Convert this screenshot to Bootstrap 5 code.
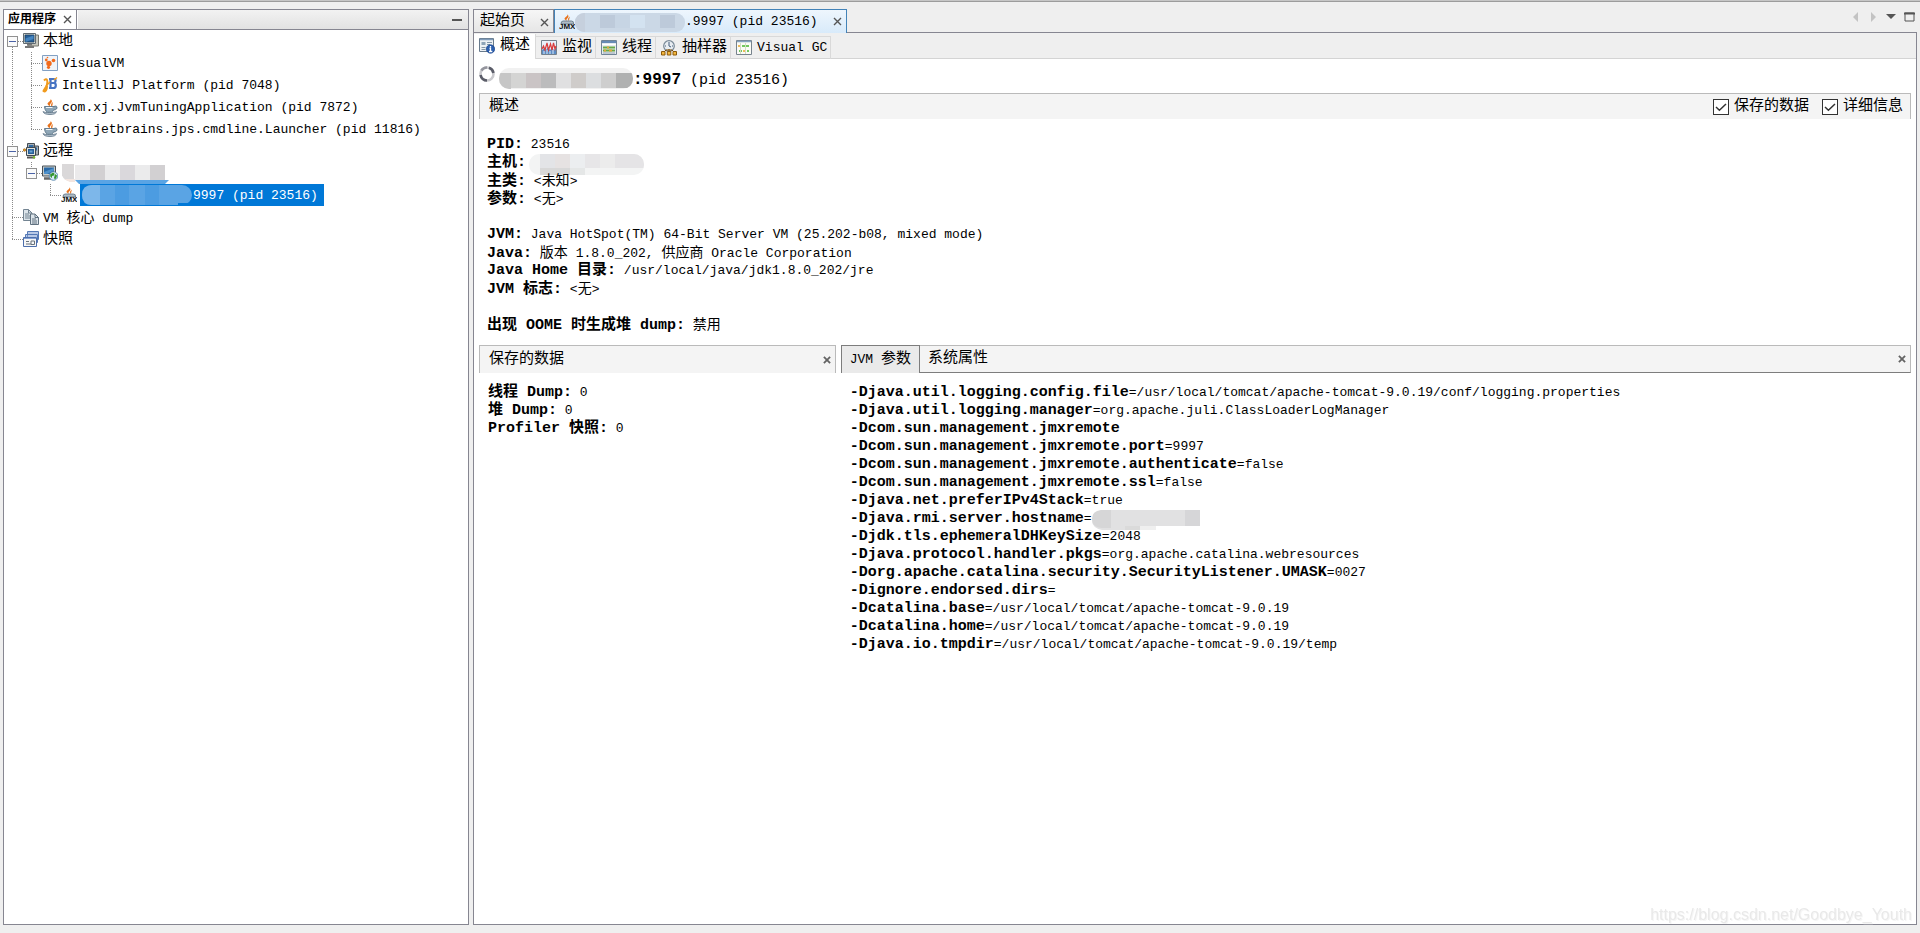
<!DOCTYPE html>
<html lang="zh-CN">
<head>
<meta charset="utf-8">
<meta name="viewport" content="width=device-width, initial-scale=1">
<title>VisualVM</title>
<link rel="stylesheet" href="https://cdn.jsdelivr.net/npm/bootstrap@5.3.0/dist/css/bootstrap.min.css">
<style>
:root{--edge:#868691;--soft:#bababa;--mono:"Liberation Mono","Noto Sans CJK SC",monospace}
body{background:#efefef;color:#000;font-family:var(--mono);font-size:13px;line-height:18px;border-top:1px solid #c6c6c6}
body::before{content:"";display:block;height:1px;background:#9c9c9c}
button{font:inherit;color:inherit;border:0;background:none;padding:0;line-height:inherit}
svg{display:block;flex:none}
.zh{font-size:15px}
.zm{font-size:14px}
.workspace{display:grid;grid-template-columns:466fr 1444fr;gap:4px;padding:7px 3px 8px;height:calc(100vh - 2px);min-height:600px}
.pane{min-width:0;min-height:0}
.apps{border:1px solid var(--edge);background:#fff}
.apps-head{height:20px;border-bottom:1px solid var(--edge);background:linear-gradient(#f2f2f2,#e2e2e2)}
.apps-tab{background:#fff;border-right:1px solid var(--edge);box-shadow:1px 0 #fff;padding:0 4px;gap:7px;font-size:12px;font-weight:700}
/* tree */
.twig{height:22px;line-height:22px;white-space:pre}
.seg{width:19px;height:22px;flex:none;background-repeat:no-repeat;display:flex;align-items:center;padding-left:3px}
.dv{background-image:repeating-linear-gradient(#8a8a8a 0 1px,transparent 1px 2px);background-size:1px 100%;background-position:8px 0}
.dt{background-image:repeating-linear-gradient(#8a8a8a 0 1px,transparent 1px 2px),repeating-linear-gradient(90deg,#8a8a8a 0 1px,transparent 1px 2px);background-size:1px 100%,11px 1px;background-position:8px 0,8px 11px}
.dl{background-image:repeating-linear-gradient(#8a8a8a 0 1px,transparent 1px 2px),repeating-linear-gradient(90deg,#8a8a8a 0 1px,transparent 1px 2px);background-size:1px 11px,11px 1px;background-position:8px 0,8px 11px}
.ds{background-image:repeating-linear-gradient(#8a8a8a 0 1px,transparent 1px 2px),repeating-linear-gradient(90deg,#8a8a8a 0 1px,transparent 1px 2px);background-size:1px 11px,11px 1px;background-position:8px 11px,8px 11px}
.knob{width:11px;height:11px;border:1px solid #919191;background:linear-gradient(#4b63a7,#4b63a7) center/7px 1px no-repeat,#fafafa}
.node{margin-left:4px}
span.node,.picked>span{padding-top:2px}
.picked{background:#0078d7;color:#fff;margin-left:3px;padding:0 6px 0 1px;height:22px}
/* document tabs */
.docs{height:23px}
.doc{border:1px solid var(--edge);border-bottom:0;background:linear-gradient(#f6f6f6,#e6e6e6);height:23px;padding:2px 4px 0 6px;gap:15px}
.doc.now{border-color:#4383b8;background:linear-gradient(#eef6fd,#d8eafa);padding:0 4px;height:24px}
.body-pane{border:1px solid var(--edge);background:#fff;min-height:0}
.views{height:26px;background:#efefef;border-bottom:1px solid #d4d4d4}
.view{margin-top:3px;height:23px;border:1px solid #d9d9d9;border-left:0;border-bottom:0;padding:0 3px 0 5px;gap:5px}
.view.now{margin-top:1px;height:25px;background:#fff;border-top:0;padding:0 5px 2px;border-color:#d9d9d9}
.heading{height:34px;padding:0 0 0 5px;font-size:15px}
.heading b{font-size:16px}
.heading>span{padding-top:8px;white-space:pre}
.bar{height:26px;border:1px solid var(--soft);border-bottom:0;background:#f4f4f4;margin:0;padding-left:9px;padding-right:7px}
.checks{gap:13px}
.bar input{appearance:none;width:16px;height:16px;margin:0 5px 0 0;border:1px solid #333;background:#fff url("data:image/svg+xml,%3Csvg xmlns='http://www.w3.org/2000/svg' viewBox='0 0 14 14'%3E%3Cpath d='M2 7l3.4 3.2L12 4' fill='none' stroke='%23333' stroke-width='1.5'/%3E%3C/svg%3E")}
.lines>div{height:18px;white-space:pre}
.lines b{font-size:15px}
.details{padding:0 1px}
.info{padding:17px 8px 11px}
.lower{display:grid;grid-template-columns:357fr 1071fr;gap:5px}
.lower .bar{height:28px}
.lower .lines{padding:11px 9px}
.props{border-bottom:1px solid #7d7d7d!important;padding:0 4px 0 0!important}
.prop{padding:0 8px}
.prop.now{background:#eaeaea;border:1px solid #7d7d7d;border-bottom:0;margin:-1px 0 -1px -1px}
.stamp{right:8px;bottom:8px;font:16px/20px "Liberation Sans",sans-serif;color:#e9e9e9;text-shadow:1px 1px #f6f6f6}
</style>
</head>
<body>
<svg width="0" height="0" class="position-absolute" aria-hidden="true">
<defs>
<symbol id="cup" viewBox="0 0 16 16"><path d="M8.500 0C9.500 2 5.500 3 5.500 5L8 8c-.6-2 .2-3 1.500-4.500C10.500 2 9.500 1 8.500 0zM11 3C8.500 5 9 6 9.500 8c1.500-1.500.7-2.500 1.500-5z" fill="#e8731d"/><path d="M2.500 7.500h9.500c1.500-1 3.500-.3 3 1.500-.3 1.500-2 2-3.500 2-.5 1.300-1.300 2-2 2.300h-4C3.500 12 2.500 10 2.500 7.500z" fill="#8fa6b6" stroke="#4f6a7e" stroke-width=".8"/><path d="M4 8.500h6.500" stroke="#eef4f8"/><path d="M1 12.500c1.500 1.500 11.500 1.500 13.500 0-.5 2-2.500 3-6.500 3s-6.500-1-7-3z" fill="#b4c2cd" stroke="#5d7486" stroke-width=".8"/></symbol>
<symbol id="jmx" viewBox="0 0 16 16"><path d="M8.500 0C9.500 2 5.500 3 5.500 5L7.500 7C7 5 8.500 4.500 9.300 3 9.700 2 9 1 8.500 0zM11 2.500C8.500 4.500 9 5 9.500 7c1-1 .5-2.500 1.500-4.500z" fill="#e8731d"/><path d="M2 10q0-3 2-3h8.500q2.500 0 2 3z" fill="#b0bcc6" stroke="#5b6e7e" stroke-width=".8"/><text x="0" y="15" font-family="Liberation Sans" font-weight="700" font-size="8" fill="#111">JMX</text></symbol>
<symbol id="pcs" viewBox="0 0 16 16"><path d="M5 2h10.500v11H5z" fill="#c7c7bd" stroke="#77776e"/><path d="M.5.500h12v10H.500z" fill="#dcdcd0" stroke="#606a72"/><path d="M2 2h9v7H2z" fill="#265f98" stroke="#173d66" stroke-width=".8"/><path d="M2.500 5.500l8-3v3.500l-8 3z" fill="#4585c0"/><path d="M4 11h5v1.500H4zM2 13h9v2H2z" fill="#777"/></symbol>
<symbol id="net" viewBox="0 0 16 16"><path d="M4.500.500h7v7h-7zM9.500 3h6v9h-6z" fill="#a9b1b7" stroke="#444d55"/><path d="M6 2h4v2H6zM11 4.500h3v3h-3z" fill="#2f6aa4"/><path d="M3.500 4.500h9v8h-9z" fill="#dfe2df" stroke="#3e4952"/><path d="M5 6h6v5H5z" fill="#265f98"/><path d="M6.500 7.500h3v2h-3z" fill="#69a5d6"/><path d="M4 14.500h8" stroke="#555" stroke-width="2"/><circle cx="1.500" cy="7" r="1.300" fill="#e69a2b" stroke="#935c0b" stroke-width=".6"/><circle cx="11" cy="14.300" r="1.200" fill="#76b82a"/></symbol>
<symbol id="host" viewBox="0 0 16 16"><path d="M.5 1h13v10H.500z" fill="#c9ccc9" stroke="#48525a"/><path d="M2 2.500h10V9H2z" fill="#2a69a5"/><path d="M2 7l10-4v2.500L5 9H2z" fill="#4f91cb"/><path d="M2 13.500h7" stroke="#666" stroke-width="2.500"/><circle cx="11.500" cy="11" r="4.300" fill="#d6eaf8" stroke="#4b7da6" stroke-width=".8"/><path d="M8 9.500l3-2 1.500 1-.5 2-2 .5v2l-1.500-1zM13 9l2 1.500-.5 2-1.500 2-1-1.500z" fill="#35952f"/></symbol>
<symbol id="vvm" viewBox="0 0 16 16"><path d="M.5.500h15v15H.500z" fill="#f0f4f9" stroke="#82a0c3"/><circle cx="7" cy="8.500" r="2.700" fill="#f26a1b"/><circle cx="4.300" cy="5" r="1.400" fill="#f26a1b"/><circle cx="11.500" cy="5.500" r="1.800" fill="#f26a1b"/><circle cx="6.500" cy="12.300" r="1.600" fill="#f26a1b"/><circle cx="5.500" cy="2.500" r=".8" fill="#f26a1b"/></symbol>
<symbol id="ij" viewBox="0 0 16 16"><path d="M7 2h4.500c3 0 2.500 3.500.5 3.800 2.500.5 2.500 5.200-.5 5.200H7M8.500 2v9M9 6h3.500" fill="none" stroke="#4774c4" stroke-width="2.200"/><path d="M2 3.500c3-3 4 0 3 4-1 4-3.500 5-3.500 6.500 2 1.500 3.500-1 3.500-5" fill="none" stroke="#f19b1d" stroke-width="2"/><path d="M4 9l4-4M12 3l3-2.500" stroke="#f19b1d" stroke-width="1.300"/></symbol>
<symbol id="dump" viewBox="0 0 16 16"><path d="M.5.500h5L9 4v7.500H.500z" fill="#dce4ea" stroke="#738492"/><path d="M5.500.500V4H9M2 5h4M2 7h5M2 9h5" fill="none" stroke="#738492"/><path d="M7.500 5H12l3.500 3.500v7h-8z" fill="#dce4ea" stroke="#60717f"/><path d="M12 5v3.500h3.500M9 10h4M9 12h5M9 14h5" fill="none" stroke="#60717f"/></symbol>
<symbol id="snap" viewBox="0 0 16 16"><path d="M4.500.500h11v8h-11zM2.500 3.500h12v8h-12z" fill="#e9eef8" stroke="#5478b5"/><path d="M5 2h10M3 5h11" stroke="#89a4d4"/><path d="M.5 6.500h13v9H.500z" fill="#f7f7f7" stroke="#4d6fac"/><path d="M1 7.500h12" stroke="#86a2d4"/><path d="M3 10.500h3M3 13h5M8 10h3.500v3.500H8z" stroke="#68737d" fill="none"/></symbol>
<symbol id="over" viewBox="0 0 16 16"><path d="M.5.500h14v13H.500z" fill="#eef1f4" stroke="#687b8d"/><path d="M1 1.500h13" stroke="#7f9bb9" stroke-width="1.500"/><path d="M2.500 4h4v3h-4z" fill="#8fa4b7"/><path d="M8 4.500h5M8 6.500h3M2.500 9.500h4M2.500 11.500h4" stroke="#8497a7"/><circle cx="11.500" cy="11" r="4.200" fill="#2c5fae" stroke="#17408a" stroke-width=".7"/><path d="M11.500 8v1.500M10.500 10.500h1v3M10 13.500h3.300" stroke="#fff" stroke-width="1.300" fill="none"/></symbol>
<symbol id="mon" viewBox="0 0 16 16"><path d="M.5.500h15v14H.500z" fill="#e8f0fa" stroke="#75818c"/><path d="M1 10l2-2 2 2 2-3 2 3 2-2 2 2 2-2v6H1z" fill="#5b8cc5"/><path d="M1 9l1.500-3L4 10l2-7 1.500 7 2-6L11 10l1.500-7L14 9l1-3" fill="none" stroke="#d93c3c" stroke-width="1.200"/><path d="M3 14v-3M6 14v-4M9 14v-3M12 14v-4" stroke="#dce9f7"/></symbol>
<symbol id="thr" viewBox="0 0 16 16"><path d="M.5.500h15v14H.500z" fill="#e6ebef" stroke="#708496"/><path d="M1 2h14" stroke="#668bb5" stroke-width="2"/><path d="M1 4.500h14" stroke="#fff"/><path d="M2 7.500h12" stroke="#67a847" stroke-width="2"/><path d="M2 10.500h12" stroke="#67a847" stroke-width="2"/><path d="M3 10.500h2M8 10.500h3M6 7.500h2" stroke="#e0a63b" stroke-width="2"/><path d="M2 13h12" stroke="#95a5b3"/></symbol>
<symbol id="smp" viewBox="0 0 16 16"><circle cx="8" cy="6" r="5.300" fill="#e8edf2" stroke="#788896" stroke-width="1.200"/><path d="M8 2v4l2 1M4 6h1M11 6h1" stroke="#425b78" fill="none"/><path d="M2 13l3-3h6l3 3M8 9v4" fill="none" stroke="#7a4c0b"/><path d="M.5 11.500h3.500V15H.500zM6.300 11.500h3.500V15H6.300zM12 11.500h3.500V15H12z" fill="#f3b63c" stroke="#8c5a0a"/></symbol>
<symbol id="vgc" viewBox="0 0 16 16"><path d="M.5.500h15v14H.500z" fill="#fbfbf6" stroke="#77838d"/><path d="M1 1.500h14" stroke="#86a3c0" stroke-width="1.500"/><path d="M2 6h3M7 11h3" stroke="#e7a52a" stroke-width="1.500"/><path d="M6 6h7M3 11h3M11 11h2" stroke="#45b82c" stroke-width="1.500"/><path d="M4.500 3v11M9.500 3v11" stroke="#d3dcc4"/></symbol>
<symbol id="x" viewBox="0 0 9 9"><path d="M1 1l7 7M8 1L1 8" stroke="#555" stroke-width="1.400"/></symbol>
<symbol id="xb" viewBox="0 0 9 9"><path d="M1 1l7 7M8 1L1 8" stroke="#636363" stroke-width="2"/></symbol>
</defs>
</svg>

<div class="workspace">
  <aside class="pane apps d-flex flex-column">
    <div class="apps-head d-flex align-items-center flex-shrink-0">
      <div class="apps-tab d-flex align-items-center h-100"><span>应用程序</span><button type="button" aria-label="关闭"><svg width="9" height="9"><use href="#x"/></svg></button></div>
      <button type="button" class="ms-auto me-1" aria-label="最小化"><svg width="14" height="10"><path d="M2 5h10" stroke="#555" stroke-width="2"/></svg></button>
    </div>
    <div role="tree">
      <div class="twig d-flex align-items-center"><span class="seg ds"><button type="button" class="knob" aria-label="折叠"></button></span><svg width="16" height="16"><use href="#pcs"/></svg><span class="node zh">本地</span></div>
      <div class="twig d-flex align-items-center"><span class="seg dv"></span><span class="seg dt"></span><svg width="16" height="16"><use href="#vvm"/></svg><span class="node">VisualVM</span></div>
      <div class="twig d-flex align-items-center"><span class="seg dv"></span><span class="seg dt"></span><svg width="16" height="16"><use href="#ij"/></svg><span class="node">IntelliJ Platform (pid 7048)</span></div>
      <div class="twig d-flex align-items-center"><span class="seg dv"></span><span class="seg dt"></span><svg width="16" height="16"><use href="#cup"/></svg><span class="node">com.xj.JvmTuningApplication (pid 7872)</span></div>
      <div class="twig d-flex align-items-center"><span class="seg dv"></span><span class="seg dl"></span><svg width="16" height="16"><use href="#cup"/></svg><span class="node">org.jetbrains.jps.cmdline.Launcher (pid 11816)</span></div>
      <div class="twig d-flex align-items-center"><span class="seg dt"><button type="button" class="knob" aria-label="折叠"></button></span><svg width="16" height="16"><use href="#net"/></svg><span class="node zh">远程</span></div>
      <div class="twig d-flex align-items-center"><span class="seg dv"></span><span class="seg dl"><button type="button" class="knob" aria-label="折叠"></button></span><svg width="16" height="16"><use href="#host"/></svg>
        <svg class="node" width="108" height="22"><path d="M12 2H0v0q-4 18 12 18z" fill="#dad8d9"/><path d="M2 17h11v3H8z" fill="#f3e5df"/><path d="M13 3h15v15H13z" fill="#ebeaeb"/><path d="M28 3h15v15H28zM88 3h15v15H88z" fill="#d2d0d2"/><path d="M43 3h15v15H43zM73 3h15v15H73z" fill="#ebebec"/><path d="M58 3h15v15H58z" fill="#dad8dc"/><path d="M13 18h94l-4 4H17z" fill="#5aa4e4"/></svg></div>
      <div class="twig d-flex align-items-center"><span class="seg dv"></span><span class="seg"></span><span class="seg dl"></span><svg width="16" height="16"><use href="#jmx"/></svg><span class="picked d-flex align-items-center"><svg width="112" height="22"><rect y="1" x="1" width="110" height="20" rx="10" fill="#5aa4e4"/><path d="M11 1Q1 1 1 11t10 10h8V1z" fill="#7db7ea"/><path d="M34 1h14v20H34zM64 1h14v20H64z" fill="#4c9ce1"/><path d="M97 19h14v2H97z" fill="#0078d7"/></svg><span>9997 (pid 23516)</span></span></div>
      <div class="twig d-flex align-items-center"><span class="seg dt"></span><svg width="16" height="16"><use href="#dump"/></svg><span class="node">VM <span class="zm">核心</span> dump</span></div>
      <div class="twig d-flex align-items-center"><span class="seg dl"></span><svg width="16" height="16"><use href="#snap"/></svg><span class="node zh">快照</span></div>
    </div>
  </aside>

  <main class="pane d-flex flex-column">
    <div class="docs d-flex flex-shrink-0">
      <div class="doc d-flex align-items-center"><button type="button" class="zh">起始页</button><button type="button" aria-label="关闭"><svg width="9" height="9"><use href="#x"/></svg></button></div>
      <div class="doc now d-flex align-items-center position-relative"><button type="button" class="d-flex align-items-center"><svg width="16" height="16"><use href="#jmx"/></svg><svg width="110" height="20"><defs><clipPath id="p1"><rect width="110" height="19" y="1" rx="9"/></clipPath></defs><g clip-path="url(#p1)"><path d="M0 0h112v20H0z" fill="#cbd8e6"/><path d="M0 0h10v20H0z" fill="#c6d0dd"/><path d="M25 3h15v13H25zM85 3h15v13H85z" fill="#bdcada"/><path d="M40 3h30v13H40z" fill="#c7d5e4"/><path d="M55 3h15v13H55z" fill="#d3e2f0"/></g></svg><span>.9997 (pid 23516)</span></button><button type="button" aria-label="关闭"><svg width="9" height="9"><use href="#x"/></svg></button></div>
      <div class="ms-auto d-flex align-items-center pb-2" aria-hidden="true"><svg width="66" height="12"><path d="M7 1v10L2 6zM20 1v10l5-5z" fill="#c3c3c3"/><path d="M35 3h10l-5 5z" fill="#555"/><path d="M54 2h9v8h-9z" fill="none" stroke="#555"/><path d="M53 2.500h11" stroke="#555" stroke-width="2"/></svg></div>
    </div>
    <div class="body-pane flex-grow-1">
      <div class="views d-flex" role="tablist">
        <button type="button" role="tab" class="view now d-flex align-items-center"><svg width="16" height="16"><use href="#over"/></svg><span class="zh">概述</span></button>
        <button type="button" role="tab" class="view d-flex align-items-center"><svg width="16" height="16"><use href="#mon"/></svg><span class="zh">监视</span></button>
        <button type="button" role="tab" class="view d-flex align-items-center"><svg width="16" height="16"><use href="#thr"/></svg><span class="zh">线程</span></button>
        <button type="button" role="tab" class="view d-flex align-items-center"><svg width="16" height="16"><use href="#smp"/></svg><span class="zh">抽样器</span></button>
        <button type="button" role="tab" class="view d-flex align-items-center"><svg width="16" height="16"><use href="#vgc"/></svg><span>Visual GC</span></button>
      </div>
      <div class="heading d-flex align-items-center">
        <svg class="mb-1" width="16" height="16"><circle cx="8" cy="8" r="6.500" fill="none" stroke="#c9c9cd" stroke-width="2.600"/><path d="M10 1.800A6.500 6.500 0 0 1 14.400 7M1.600 9A6.500 6.500 0 0 0 8 14.500" fill="none" stroke="#5a5c68" stroke-width="2.600"/><path d="M2.400 4.500A6.500 6.500 0 0 1 8 1.500" fill="none" stroke="#94959d" stroke-width="2.600"/></svg>
        <svg class="ms-1 mt-1" width="134" height="21"><defs><clipPath id="p2"><rect width="134" height="21" rx="10"/></clipPath></defs><g clip-path="url(#p2)"><path d="M0 0h134v22H0z" fill="#f1f1f1"/><path d="M0 5h12v17H0z" fill="#c6c6c6"/><path d="M12 5h15v15H12z" fill="#d4d4d3"/><path d="M27 5h15v15H27z" fill="#cac4c5"/><path d="M42 5h15v15H42z" fill="#bcbcbd"/><path d="M57 5h15v15H57z" fill="#e0e0e1"/><path d="M72 5h15v15H72z" fill="#cfccca"/><path d="M87 5h15v15H87z" fill="#dcdee0"/><path d="M102 5h15v15h-15z" fill="#cecece"/><path d="M117 5h17v15h-17z" fill="#b0b1b1"/></g></svg>
        <span><b>:9997</b> (pid 23516)</span>
      </div>
      <div class="px-1">
        <div class="details">
        <div class="bar d-flex align-items-center">
          <span class="zh me-auto">概述</span>
          <div class="checks d-flex">
          <label class="zh d-flex align-items-center"><input type="checkbox" checked>保存的数据</label>
          <label class="zh d-flex align-items-center"><input type="checkbox" checked>详细信息</label>
          </div>
        </div>
        <div class="lines info">
          <div><b>PID:</b> 23516</div>
          <div class="d-flex"><b>主机:</b><svg width="118" height="22"><defs><clipPath id="p3"><rect x="3" width="115" height="21" rx="10"/></clipPath></defs><g clip-path="url(#p3)"><path d="M0 0h118v22H0z" fill="#f3f4f4"/><path d="M14 0h15v14H14z" fill="#e3e4e7"/><path d="M29 0h15v14H29z" fill="#e6e2e2"/><path d="M44 0h15v14H44z" fill="#eceef0"/><path d="M59 0h15v14H59z" fill="#e7e6e8"/><path d="M74 0h15v14H74z" fill="#ececec"/><path d="M89 0h30v14H89z" fill="#e5e4e6"/><path d="M14 14h30v7H14z" fill="#d8d8d8"/><path d="M44 14h15v7H44z" fill="#e5e7e7"/></g></svg></div>
          <div><b>主类:</b> &lt;<span class="zm">未知</span>&gt;</div>
          <div><b>参数:</b> &lt;<span class="zm">无</span>&gt;</div>
          <div></div>
          <div><b>JVM:</b> Java HotSpot(TM) 64-Bit Server VM (25.202-b08, mixed mode)</div>
          <div><b>Java:</b> <span class="zm">版本</span> 1.8.0_202, <span class="zm">供应商</span> Oracle Corporation</div>
          <div><b>Java Home 目录:</b> /usr/local/java/jdk1.8.0_202/jre</div>
          <div><b>JVM 标志:</b> &lt;<span class="zm">无</span>&gt;</div>
          <div></div>
          <div><b>出现 OOME 时生成堆 dump:</b> <span class="zm">禁用</span></div>
        </div>
        <div class="lower">
          <section>
            <div class="bar d-flex align-items-center pe-1"><span class="zh me-auto">保存的数据</span><button type="button" aria-label="关闭"><svg width="8" height="8"><use href="#xb"/></svg></button></div>
            <div class="lines">
              <div><b>线程 Dump:</b> 0</div>
              <div><b>堆 Dump:</b> 0</div>
              <div><b>Profiler 快照:</b> 0</div>
            </div>
          </section>
          <section>
            <div class="bar props d-flex align-items-stretch">
              <button type="button" class="prop now">JVM <span class="zh">参数</span></button>
              <button type="button" class="prop zh me-auto">系统属性</button>
              <button type="button" aria-label="关闭"><svg width="8" height="8"><use href="#xb"/></svg></button>
            </div>
            <div class="lines">
              <div><b>-Djava.util.logging.config.file</b>=/usr/local/tomcat/apache-tomcat-9.0.19/conf/logging.properties</div>
              <div><b>-Djava.util.logging.manager</b>=org.apache.juli.ClassLoaderLogManager</div>
              <div><b>-Dcom.sun.management.jmxremote</b></div>
              <div><b>-Dcom.sun.management.jmxremote.port</b>=9997</div>
              <div><b>-Dcom.sun.management.jmxremote.authenticate</b>=false</div>
              <div><b>-Dcom.sun.management.jmxremote.ssl</b>=false</div>
              <div><b>-Djava.net.preferIPv4Stack</b>=true</div>
              <div class="d-flex"><b>-Djava.rmi.server.hostname</b>=<svg width="108" height="20"><path d="M10 0h98v16H64v4H10Q0 18 0 10T10 0z" fill="#e1e1e2"/><path d="M9 0h10v18H9Q0 17 0 9T9 0z" fill="#d6d6d7"/><path d="M33 16h15v4H33z" fill="#dadada"/><path d="M93 0h15v16H93z" fill="#d6d6d8"/><path d="M48 16h16v4H48z" fill="#efefef"/></svg></div>
              <div><b>-Djdk.tls.ephemeralDHKeySize</b>=2048</div>
              <div><b>-Djava.protocol.handler.pkgs</b>=org.apache.catalina.webresources</div>
              <div><b>-Dorg.apache.catalina.security.SecurityListener.UMASK</b>=0027</div>
              <div><b>-Dignore.endorsed.dirs</b>=</div>
              <div><b>-Dcatalina.base</b>=/usr/local/tomcat/apache-tomcat-9.0.19</div>
              <div><b>-Dcatalina.home</b>=/usr/local/tomcat/apache-tomcat-9.0.19</div>
              <div><b>-Djava.io.tmpdir</b>=/usr/local/tomcat/apache-tomcat-9.0.19/temp</div>
            </div>
          </section>
        </div>
        </div>
      </div>
    </div>
  </main>
</div>
<div class="stamp position-fixed">https://blog.csdn.net/Goodbye_Youth</div>
<script src="https://cdn.jsdelivr.net/npm/bootstrap@5.3.0/dist/js/bootstrap.bundle.min.js"></script>
</body>
</html>
